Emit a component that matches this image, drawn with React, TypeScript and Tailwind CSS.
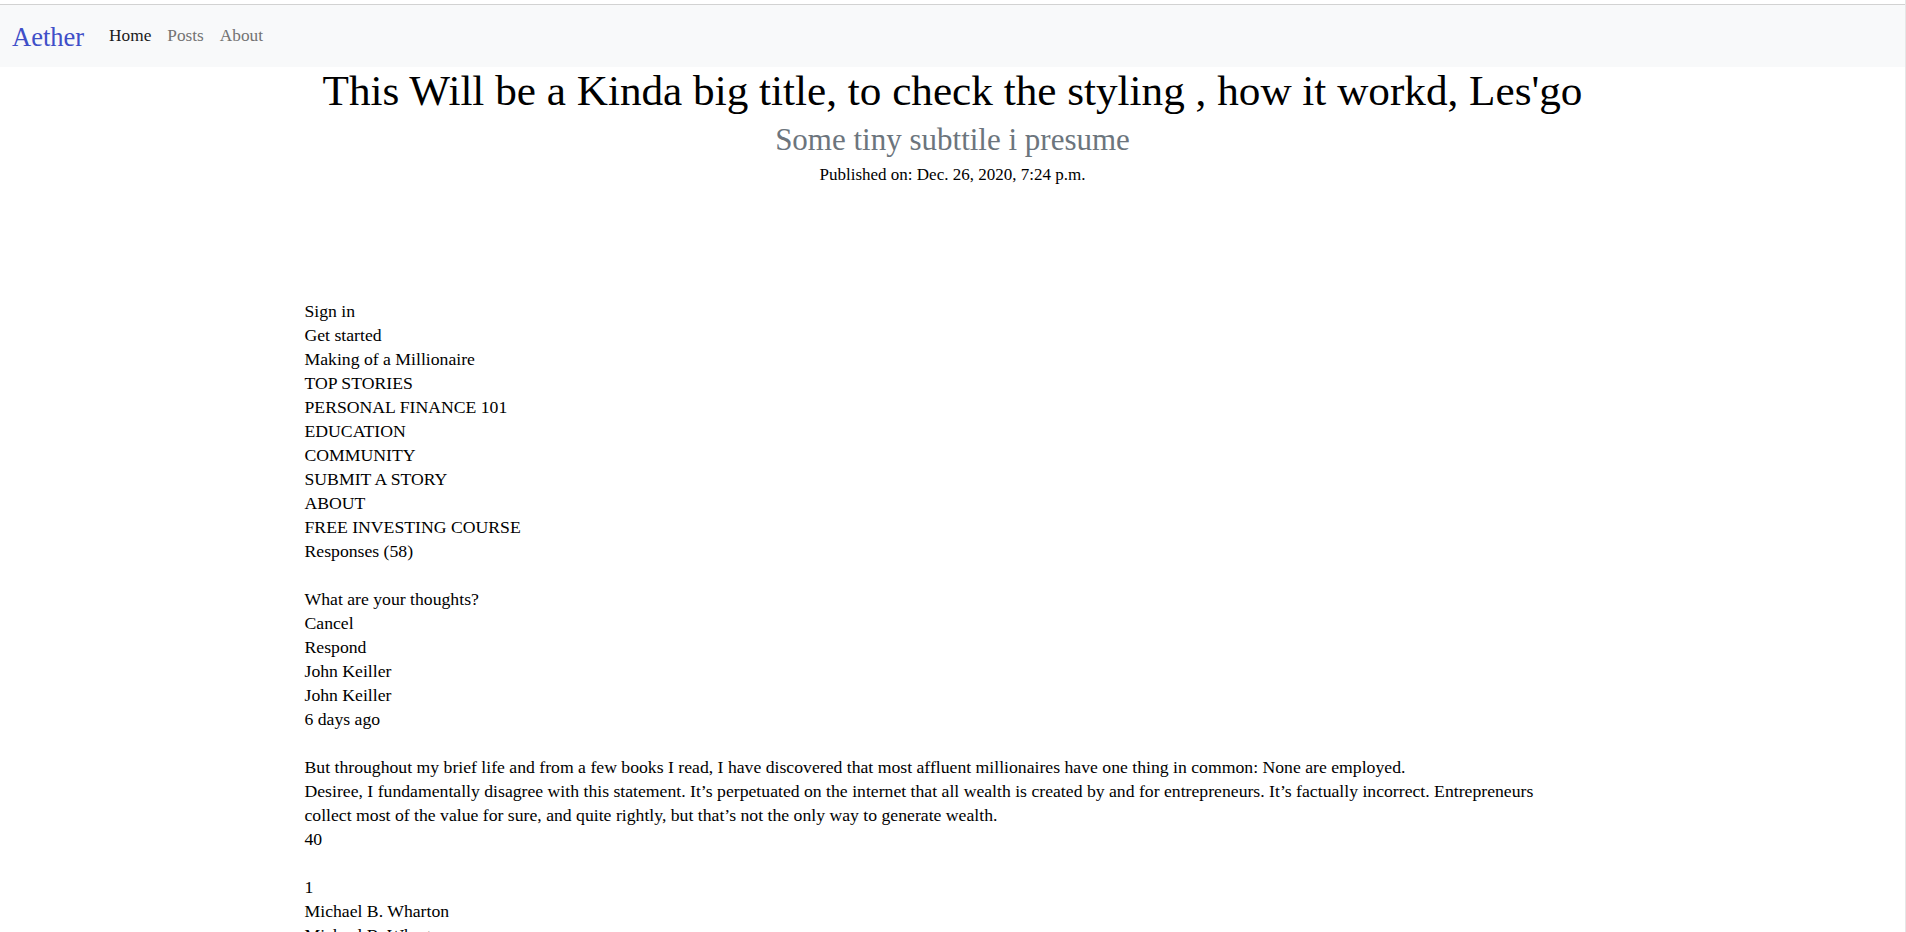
const lines: React.ReactNode[] = [
  "Sign in",
  "Get started",
  "Making of a Millionaire",
  "TOP STORIES",
  "PERSONAL FINANCE 101",
  "EDUCATION",
  "COMMUNITY",
  "SUBMIT A STORY",
  "ABOUT",
  "FREE INVESTING COURSE",
  "Responses (58)",
  "",
  "What are your thoughts?",
  "Cancel",
  "Respond",
  "John Keiller",
  "John Keiller",
  "6 days ago",
  "",
  "But throughout my brief life and from a few books I read, I have discovered that most affluent millionaires have one thing in common: None are employed.",
  <>
    Desiree, I fundamentally disagree with this statement. It’s perpetuated on the internet that all wealth is created by and for entrepreneurs. It’s factually incorrect. Entrepreneurs
    <br />
    collect most of the value for sure, and quite rightly, but that’s not the only way to generate wealth.
  </>,
  "40",
  "",
  "1",
  "Michael B. Wharton",
  "Michael B. Wharton",
  "5 days ago",
  "",
];

function Navbar() {
  return (
    <nav className="h-[62px] bg-[#f8f9fa] flex items-start pl-3">
      <a href="#" className="mt-[14px] text-[26.5px] leading-[36px] text-[#3f4fc8]">
        Aether
      </a>
      <ul className="flex gap-4 ml-[25px] mt-[19px] text-[17.3px] leading-[24px]">
        <li className="text-[#1a1a1a]">Home</li>
        <li className="text-[#737373]">Posts</li>
        <li className="text-[#737373]">About</li>
      </ul>
    </nav>
  );
}

export default function App() {
  return (
    <div className="min-h-screen bg-white border-r border-[#e6e6e6] font-['Liberation_Serif',serif] text-black">
      <div className="h-1 bg-white" />
      <div className="h-px bg-[#d2d2d2]" />
      <Navbar />
      <header className="text-center">
        <h1 className="text-[43.2px] leading-[48px]">
          This Will be a Kinda big title, to check the styling , how it workd, Les'go
        </h1>
        <h3 className="mt-2 text-[31px] leading-[34px] text-[#6c757d]">Some tiny subttile i presume</h3>
        <p className="mt-[6px] text-[17px] leading-[24px]">Published on: Dec. 26, 2020, 7:24 p.m.</p>
      </header>
      <article className="max-w-[1320px] mx-auto px-3 mt-[112px] text-[17.7px] leading-[24px]">
        {lines.map((line, i) => (
          <div key={i} className="min-h-[24px]">
            {line}
          </div>
        ))}
      </article>
    </div>
  );
}
